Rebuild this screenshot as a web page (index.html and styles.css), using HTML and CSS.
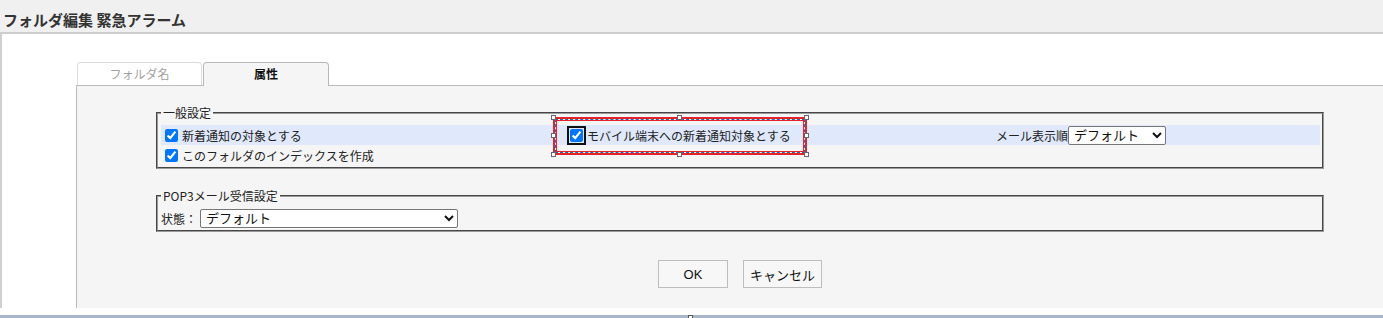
FILE: index.html
```html
<!DOCTYPE html>
<html lang="ja">
<head>
<meta charset="utf-8">
<title>フォルダ編集 緊急アラーム</title>
<link rel="stylesheet" href="styles.css">
</head>
<body>
<header class="titlebar"><h1 class="title">フォルダ編集 緊急アラーム</h1></header>
<main class="frame">
  <div class="tabs">
    <div class="tab">フォルダ名</div>
    <div class="tab tab-active">属性</div>
  </div>
  <section class="panel">
    <fieldset class="group">
      <legend class="legend">一般設定</legend>
      <div class="row row-hl">
        <label class="cell cell-a"><input type="checkbox" class="chk" checked><span>新着通知の対象とする</span></label>
        <div class="cell cell-b">
          <label class="chk-item"><input type="checkbox" class="chk chk-focus" checked><span>モバイル端末への新着通知対象とする</span></label>
          <div class="selection">
            <span class="hd hd-tl"></span><span class="hd hd-tc"></span><span class="hd hd-tr"></span>
            <span class="hd hd-ml"></span><span class="hd hd-mr"></span>
            <span class="hd hd-bl"></span><span class="hd hd-bc"></span><span class="hd hd-br"></span>
          </div>
        </div>
        <div class="cell cell-c"><span>メール表示順</span><select class="select select-order"><option>デフォルト</option></select></div>
      </div>
      <div class="row">
        <label class="cell cell-a"><input type="checkbox" class="chk" checked><span>このフォルダのインデックスを作成</span></label>
      </div>
    </fieldset>
    <fieldset class="group group-pop">
      <legend class="legend">POP3メール受信設定</legend>
      <div class="row row-pop">
        <span>状態：</span><select class="select select-state"><option>デフォルト</option></select>
      </div>
    </fieldset>
    <div class="actions">
      <button class="btn" type="button">OK</button>
      <button class="btn" type="button">キャンセル</button>
    </div>
  </section>
</main>
<div class="spacer"></div>
<div class="bar"><span class="bar-handle"></span></div>
</body>
</html>
```
FILE: styles.css
```css
* { box-sizing: border-box; }
html, body { margin: 0; padding: 0; }
body {
  font-family: "Noto Sans CJK JP", "Noto Sans", sans-serif;
  font-size: 12px;
  color: #222;
  background: #fff;
  overflow: hidden;
}
.titlebar {
  height: 34px;
  background: #f0f0f0;
  border-bottom: 2px solid #cdcdcd;
  padding: 7px 0 0 3px;
}
.title {
  margin: 0;
  font-size: 15px;
  line-height: 26px;
  font-weight: bold;
  color: #333;
  letter-spacing: 0;
}
.frame {
  border-left: 2px solid #d0d0d0;
  padding: 28px 0 0 74px;
}
.tabs {
  display: flex;
  gap: 1px;
  padding-left: 1px;
  height: 23px;
  align-items: flex-end;
}
.tab {
  width: 125px;
  height: 23px;
  line-height: 22px;
  text-align: center;
  background: #fff;
  color: #a0a0a0;
  border: 1px solid #dcdcdc;
  border-bottom: none;
  border-radius: 4px 4px 0 0;
}
.tab-active {
  width: 126px;
  height: 24px;
  margin-bottom: -1px;
  position: relative;
  z-index: 1;
  background: #f5f5f5;
  color: #111;
  font-weight: bold;
  border-color: #b8b8b8;
  line-height: 22px;
}
.panel {
  background: #f5f5f5;
  border-top: 1px solid #bcbcbc;
  border-left: 1px solid #bcbcbc;
  padding: 20px 0 20px 0;
}
.group {
  margin: 0 59px 0 79px;
  padding: 5px 2px 2px 3px;
  border: 2px groove #9a9a9a;
  min-width: 0;
}
.legend {
  padding: 0 2px;
  line-height: 14px;
  font-size: 12px;
  color: #222;
}
.row {
  display: grid;
  grid-template-columns: 392px 443px 1fr;
  height: 20px;
  align-items: center;
}
.row-hl { background: #dfe9fb; }
.cell {
  display: flex;
  align-items: center;
  height: 20px;
  white-space: nowrap;
}
.chk {
  width: 13px;
  height: 13px;
  margin: 0 4px 0 4px;
}
.cell-b {
  position: relative;
  padding-left: 17px;
}
.chk-item {
  display: flex;
  align-items: center;
}
.chk-focus {
  margin: 0 4px 0 0;
  outline: 2px solid #111;
  outline-offset: 1px;
  border-radius: 2px;
}
.selection {
  position: absolute;
  left: 0;
  top: -8px;
  width: 254px;
  height: 38px;
  border: 2px solid #e3222a;
}
.selection::before {
  content: "";
  position: absolute;
  inset: 0;
  border: 1px solid #fff;
}
.selection::after {
  content: "";
  position: absolute;
  inset: 0;
  border: 1px dashed #2f5fc8;
  box-shadow: inset 0 0 0 1px #e3222a;
}
.hd {
  position: absolute;
  width: 5px;
  height: 5px;
  background: #fff;
  border: 1px solid #666;
  z-index: 2;
}
.hd-tl { left: -4px; top: -4px; }
.hd-tc { left: calc(50% - 3px); top: -4px; }
.hd-tr { right: -4px; top: -4px; }
.hd-ml { left: -4px; top: calc(50% - 3px); }
.hd-mr { right: -4px; top: calc(50% - 3px); }
.hd-bl { left: -4px; bottom: -4px; }
.hd-bc { left: calc(50% - 3px); bottom: -4px; }
.hd-br { right: -4px; bottom: -4px; }
.cell-c { gap: 0; }
.select {
  font-family: "Liberation Sans", "Noto Sans CJK JP", sans-serif;
  font-size: 13px;
  height: 19px;
  padding: 0 1px;
  color: #111;
  background: #fff;
  border: 1px solid #767676;
  border-radius: 2px;
}
.select-order { width: 98px; }
.group-pop {
  margin-top: 20px;
  padding: 4px 2px 1px 3px;
}
.row-pop {
  display: flex;
  height: 22px;
  gap: 3px;
}
.select-state { width: 258px; }
.actions {
  display: flex;
  justify-content: center;
  gap: 15px;
  margin: 28px 59px 0 79px;
}
.btn {
  font-family: "Liberation Sans", "Noto Sans CJK JP", sans-serif;
  font-size: 13px;
  color: #111;
  min-width: 70px;
  height: 28px;
  padding: 0 6px;
  background: #f7f7f7;
  border: 1px solid #bdbdbd;
  border-radius: 0;
}
.spacer { height: 7px; background: #fff; }
.bar {
  position: relative;
  height: 3px;
  background: #a9b5c9;
}
.bar-handle {
  position: absolute;
  left: 688px;
  top: 0;
  width: 5px;
  height: 5px;
  background: #fff;
  border: 1px solid #555;
}
```
